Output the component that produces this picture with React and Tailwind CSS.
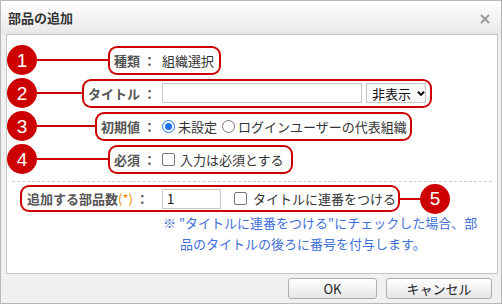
const RED = 'bg-[#cc0000]'

function Marker({ n }) {
  return (
    <span className={`w-[30px] h-[30px] shrink-0 rounded-full ${RED} text-white flex items-center justify-center font-['Liberation_Sans',sans-serif] text-[19px] leading-none`}>
      {n}
    </span>
  )
}

function Radio({ checked, className = '' }) {
  if (checked) {
    return (
      <span className={`w-[13px] h-[13px] rounded-full border-[1.5px] border-[#1a73e8] flex items-center justify-center shrink-0 ${className}`}>
        <span className="w-[7px] h-[7px] rounded-full bg-[#1a73e8]" />
      </span>
    )
  }
  return <span className={`block w-[13px] h-[13px] rounded-full border border-[#767676] bg-white shrink-0 ${className}`} />
}

function Checkbox({ className = '' }) {
  return <span className={`block w-[13px] h-[13px] rounded-[2px] border border-[#767676] bg-white shrink-0 ${className}`} />
}

// one annotated form row: marker + leader line on the left, framed label/value pair
function Row({ n, label, children, pr = 'pr-[5px]' }) {
  return (
    <div className="flex items-center h-[30px]">
      <div className="w-[153px] flex items-center">
        <Marker n={n} />
        <span className={`flex-1 h-[2px] ${RED}`} />
        <div className="h-[29px] flex items-center border-2 border-r-0 border-[#cc0000] rounded-l-[9px] pl-[4px] pr-[4px] font-bold text-[#555] whitespace-nowrap">
          {label}
        </div>
      </div>
      <div className={`h-[29px] flex items-center border-2 border-l-0 border-[#cc0000] rounded-r-[9px] pl-[2px] ${pr} text-[#333] whitespace-nowrap`}>
        {children}
      </div>
    </div>
  )
}

export default function App() {
  return (
    <div className="w-[502px] h-[304px] border border-[#b8b8b8] bg-[#f0f0f0] flex flex-col font-['Noto_Sans_CJK_JP',sans-serif] text-[13px] leading-none">
      {/* Title bar */}
      <div className="h-[33px] shrink-0 flex items-center justify-between pl-[7px] pr-[11px] bg-linear-to-b from-white to-[#e8e8e8]">
        <span className="font-bold text-[#333]">部品の追加</span>
        <svg width="10" height="10" viewBox="0 0 10 10" className="mt-[3px]">
          <path d="M1 1 L9 9 M9 1 L1 9" stroke="#9a9a9a" strokeWidth="2" />
        </svg>
      </div>

      {/* Content */}
      <div className="flex-1 ml-[5px] mr-[3px] border border-[#c4c4c4] bg-white pt-[10px]">
        <div className="flex flex-col gap-[3px]">
          <Row n="1" label="種類 ：">
            <span>組織選択</span>
          </Row>
          <Row n="2" label="タイトル ：" pr="pr-[4px]">
            <div className="flex items-center gap-[4px]">
              <span className="w-[200px] h-[20px] border border-[#c8c8c8] bg-white" />
              <span className="w-[60px] h-[20px] border border-[#c8c8c8] bg-[#fafafa] flex items-center pl-[5px] gap-[6px] text-[#111]">
                非表示
                <svg width="9" height="7" viewBox="0 0 9 7">
                  <path d="M1 1.5 L4.5 5 L8 1.5" fill="none" stroke="#111" strokeWidth="2.2" />
                </svg>
              </span>
            </div>
          </Row>
          <Row n="3" label="初期値 ：" pr="pr-[3px]">
            <div className="flex items-center">
              <Radio checked />
              <span className="ml-[3px]">未設定</span>
              <Radio className="ml-[5px]" />
              <span className="ml-[3px]">ログインユーザーの代表組織</span>
            </div>
          </Row>
          <Row n="4" label="必須 ：" pr="pr-[7px]">
            <div className="flex items-center">
              <Checkbox />
              <span className="ml-[5px]">入力は必須とする</span>
            </div>
          </Row>
        </div>

        <div className="mt-[7px] mx-[5px] border-t border-dashed border-[#cfcfcf]" />

        {/* Row 5: marker sits on the right */}
        <div className="mt-[3px] flex items-center h-[27px]">
          <div className="w-[153px] pl-[13px] flex">
            <div className="flex-1 h-[27px] flex items-center border-2 border-r-0 border-[#cc0000] rounded-l-[9px] pl-[5px] pr-[4px] font-bold text-[#555] whitespace-nowrap">
              追加する部品数<span className="text-[#f08c00] font-normal">(*)</span>&nbsp;：
            </div>
          </div>
          <div className="h-[27px] flex items-center border-2 border-l-0 border-[#cc0000] rounded-r-[9px] pl-[2px] pr-[2px] text-[#333] whitespace-nowrap">
            <span className="w-[59px] h-[20px] border border-[#c8c8c8] bg-white flex items-center pl-[4px] text-[#111]">1</span>
            <Checkbox className="ml-[13px]" />
            <span className="ml-[6px]">タイトルに連番をつける</span>
          </div>
          <span className={`w-[20px] h-[2px] ${RED}`} />
          <Marker n="5" />
        </div>

        <p className="pl-[173px] [text-indent:-17px] leading-[21px] text-[#3f6fd8]">
          ※ "タイトルに連番をつける"にチェックした場合、部<br />
          品のタイトルの後ろに番号を付与します。
        </p>
      </div>

      {/* Footer */}
      <div className="h-[29px] shrink-0 flex items-center justify-end gap-[9px] pr-[9px]">
        <button className="w-[89px] h-[21px] border border-[#adadad] rounded-[3px] bg-linear-to-b from-white to-[#e6e6e6] text-[#222]">OK</button>
        <button className="w-[106px] h-[21px] border border-[#adadad] rounded-[3px] bg-linear-to-b from-white to-[#e6e6e6] text-[#222]">キャンセル</button>
      </div>
    </div>
  )
}
